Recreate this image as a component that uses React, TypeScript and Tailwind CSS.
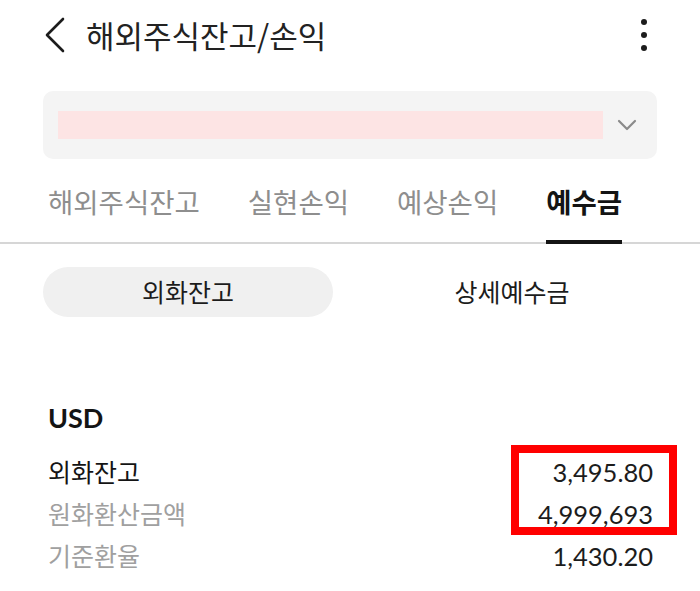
import React from "react";

const kr = { fontFamily: '"Noto Sans CJK KR", "Noto Sans", sans-serif' };
const num = { fontFamily: 'Lato, "Noto Sans CJK KR", sans-serif' };

const tabs = ["해외주식잔고", "실현손익", "예상손익", "예수금"];

const rows = [
    { label: "외화잔고", value: "3,495.80", dark: true },
    { label: "원화환산금액", value: "4,999,693", dark: false },
    { label: "기준환율", value: "1,430.20", dark: false },
];

export default function App() {
    return (
        <div className="w-[700px] h-[591px] bg-white overflow-hidden text-[#1c1c1c]" style={kr}>
            {/* header */}
            <div className="h-[70px] flex items-center pl-[44px] pr-[53px]">
                <svg width="22" height="36" viewBox="0 0 22 36" className="shrink-0">
                    <path d="M19 2 L3 18 L19 34" fill="none" stroke="#1c1c1c" strokeWidth="2.6" strokeLinecap="round" strokeLinejoin="round" />
                </svg>
                <h1 className="ml-[20px] -mt-[2px] text-[31px] leading-none text-[#222]">해외주식잔고/손익</h1>
                <div className="ml-auto flex flex-col gap-[7px] items-center">
                    <span className="w-[6px] h-[6px] rounded-full bg-[#1c1c1c]" />
                    <span className="w-[6px] h-[6px] rounded-full bg-[#1c1c1c]" />
                    <span className="w-[6px] h-[6px] rounded-full bg-[#1c1c1c]" />
                </div>
            </div>

            {/* account select */}
            <div className="mx-[43px] mt-[21px] h-[68px] rounded-[10px] bg-[#f4f4f4] flex items-center pl-[15px] pr-[20px]">
                <div className="w-[545px] h-[28px] bg-[#fde4e4]" />
                <svg width="20" height="14" viewBox="0 0 20 14" className="ml-auto">
                    <path d="M2 3 L10 11 L18 3" fill="none" stroke="#8a8a8a" strokeWidth="2.2" strokeLinecap="round" strokeLinejoin="round" />
                </svg>
            </div>

            {/* tabs */}
            <div className="relative mt-[24px] border-b-2 border-[#d6d6d6]">
                <div className="flex gap-[48px] pl-[48px]">
                    {tabs.map((t, i) => {
                        const active = i === tabs.length - 1;
                        return (
                            <div key={t} className="relative pb-[23px]">
                                <span className={`text-[27.5px] leading-[36px] ${active ? "font-bold text-[#141414]" : "text-[#8e8e8e]"}`}>{t}</span>
                                {active && <div className="absolute left-0 right-0 -bottom-[2px] h-[4px] bg-[#141414]" />}
                            </div>
                        );
                    })}
                </div>
            </div>

            {/* segment */}
            <div className="flex mt-[23px] px-[43px]">
                <div className="w-[290px] h-[50px] rounded-full bg-[#f0f0f0] flex items-center justify-center text-[25px] text-[#1c1c1c]">외화잔고</div>
                <div className="w-[290px] h-[50px] flex items-center justify-center text-[25px] text-[#1c1c1c] ml-[34px]">상세예수금</div>
            </div>

            {/* balances */}
            <div className="mt-[85px] px-[48px] pr-[47px]">
                <div className="text-[27px] font-bold leading-[32px] text-[#141414]" style={num}>USD</div>
                <div className="relative mt-[17px] flex flex-col">
                    {rows.map((r) => (
                        <div key={r.label} className="h-[42px] flex items-center justify-between">
                            <span className={`text-[25px] ${r.dark ? "text-[#141414]" : "text-[#a0a0a0]"}`}>{r.label}</span>
                            <span className="text-[25.5px] text-[#1c1c1c]" style={num}>{r.value}</span>
                        </div>
                    ))}
                    <div className="absolute left-[463px] top-[-6px] w-[166px] h-[90px] border-[8px] border-[#ff0000]" />
                </div>
            </div>
        </div>
    );
}
